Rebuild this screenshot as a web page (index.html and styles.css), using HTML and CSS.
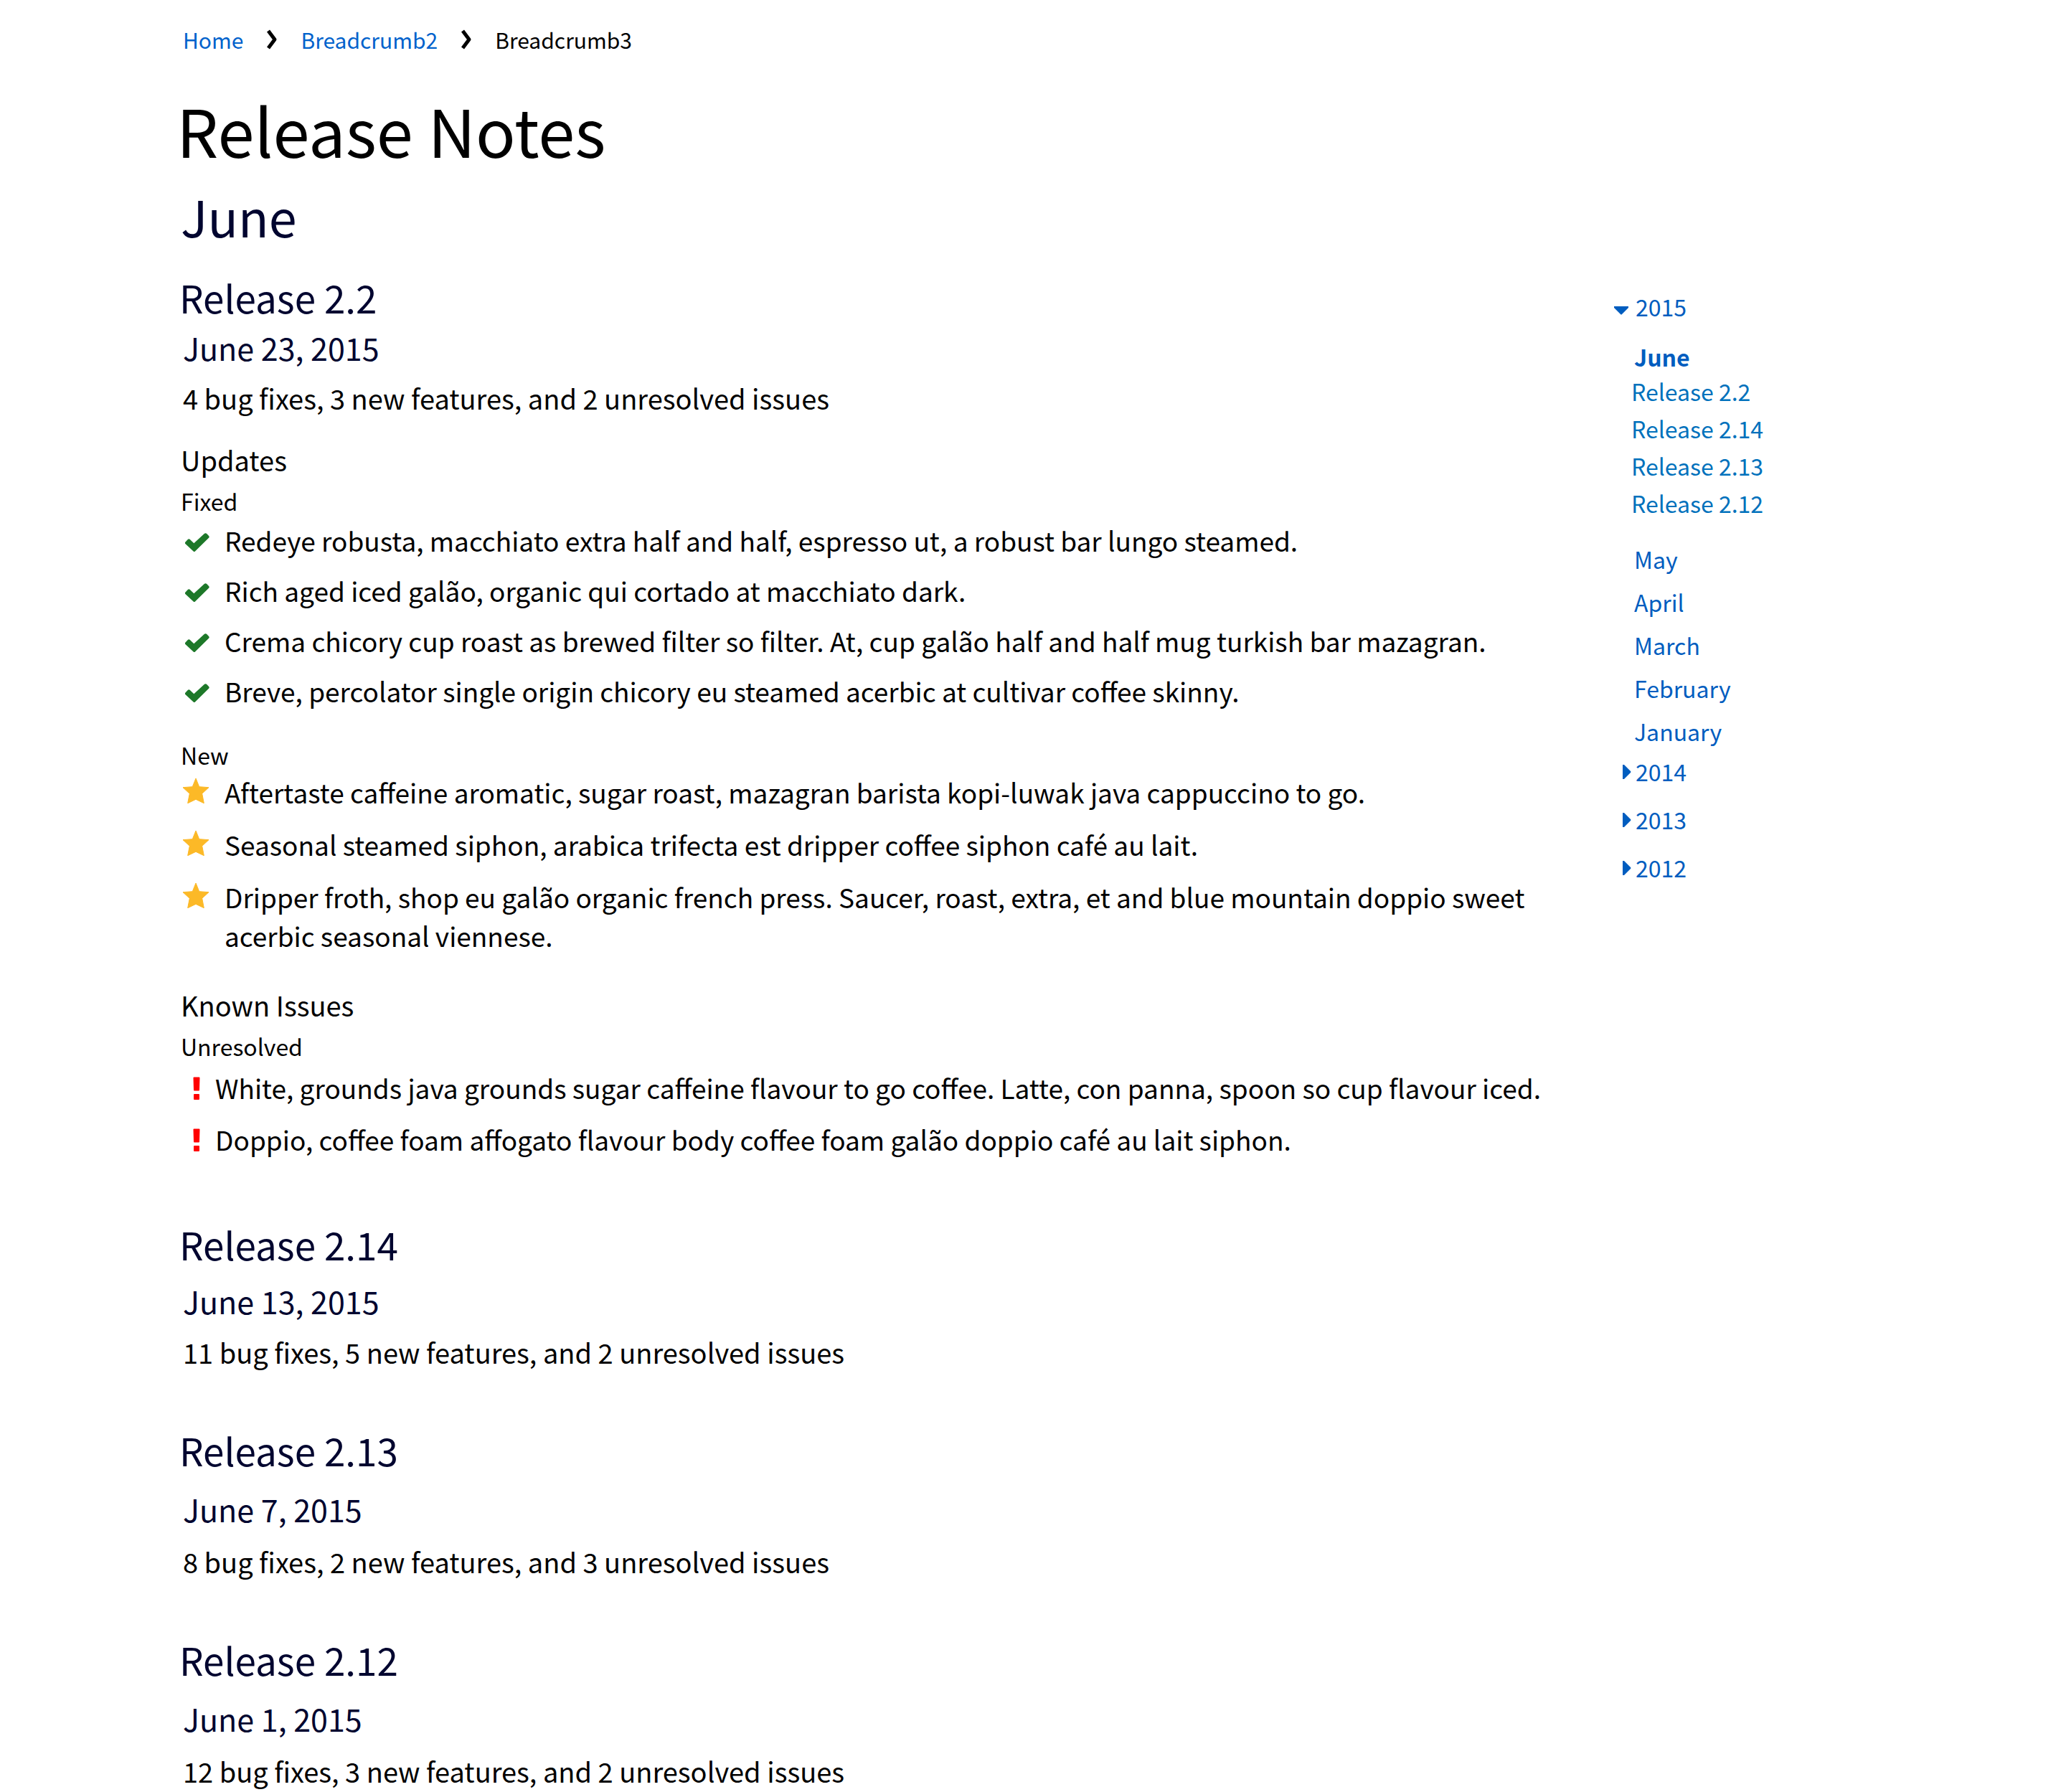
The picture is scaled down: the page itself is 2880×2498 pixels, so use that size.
FILE: index.html
```html
<!DOCTYPE html>
<html lang="en">
<head>
<meta charset="utf-8">
<meta name="viewport" content="width=device-width, initial-scale=1">
<title>Release Notes</title>
<link rel="stylesheet" href="styles.css">
</head>
<body>
<svg class="sprite" aria-hidden="true">
  <symbol id="chevron" viewBox="0 0 16 28"><path d="M3 2l9 12-9 12" fill="none" stroke="#000" stroke-width="5" stroke-linejoin="round"/></symbol>
  <symbol id="check" viewBox="0 0 34 27"><path d="M.3 12.700L4 8.700Q5.300 7.600 6.600 8.700L12.300 14.300 27 .8Q28.500-.3 30 .8L33.300 4.300Q34 5.600 33.300 6.600L14 25.400Q12.800 26.600 11.600 25.400L.3 15Q-.5 13.800.3 12.700z" fill="#1d7829"/></symbol>
  <symbol id="star" viewBox="0 0 38 36"><path d="M19 1L23.700 12.700 37 13.700 27.700 22.300 30.300 35.700 19 30.300 7.700 35.700 10.300 22.300 1 13.700 14.300 12.700z" fill="#fcb927" stroke="#fcb927" stroke-width="1" stroke-linejoin="round"/></symbol>
  <symbol id="bang" viewBox="0 0 10 32"><path d="M1.500.500h7q1 0 1 1L9 18.500q0 1-1 1H2q-1 0-1-1L.500 1.500q0-1 1-1zM2 24h6q1 0 1 1v6q0 1-1 1H2q-1 0-1-1v-6q0-1 1-1z" fill="#f00"/></symbol>
  <symbol id="caret-down" viewBox="0 0 24 24"><path d="M0 12h20v2L11 23q-1 1-2 0L0 14z" fill="#005dbf"/></symbol>
  <symbol id="caret-right" viewBox="0 0 24 24"><path d="M12 3h2l9 9q1 1 0 2l-9 9h-2z" fill="#005dbf"/></symbol>
</svg>
<div class="page">
  <nav class="crumbs" aria-label="Breadcrumb">
    <a href="#">Home</a>
    <svg class="chevron" aria-hidden="true"><use href="#chevron"/></svg>
    <a href="#">Breadcrumb2</a>
    <svg class="chevron" aria-hidden="true"><use href="#chevron"/></svg>
    <span aria-current="page">Breadcrumb3</span>
  </nav>
  <h1>Release Notes</h1>
  <h2>June</h2>
  <div class="columns">
    <main>
      <section class="release release-latest">
        <h3>Release 2.2</h3>
        <p class="date">June 23, 2015</p>
        <p class="summary">4 bug fixes, 3 new features, and 2 unresolved issues</p>
        <h4>Updates</h4>
        <h5>Fixed</h5>
        <ul class="notes fixed">
          <li><svg class="check" aria-hidden="true"><use href="#check"/></svg><span>Redeye robusta, macchiato extra half and half, espresso ut, a robust bar lungo steamed.</span></li>
          <li><svg class="check" aria-hidden="true"><use href="#check"/></svg><span>Rich aged iced galão, organic qui cortado at macchiato dark.</span></li>
          <li><svg class="check" aria-hidden="true"><use href="#check"/></svg><span>Crema chicory cup roast as brewed filter so filter. At, cup galão half and half mug turkish bar mazagran.</span></li>
          <li><svg class="check" aria-hidden="true"><use href="#check"/></svg><span>Breve, percolator single origin chicory eu steamed acerbic at cultivar coffee skinny.</span></li>
        </ul>
        <h5 class="next">New</h5>
        <ul class="notes new">
          <li><svg class="star" aria-hidden="true"><use href="#star"/></svg><span>Aftertaste caffeine aromatic, sugar roast, mazagran barista kopi-luwak java cappuccino to go.</span></li>
          <li><svg class="star" aria-hidden="true"><use href="#star"/></svg><span>Seasonal steamed siphon, arabica trifecta est dripper coffee siphon café au lait.</span></li>
          <li><svg class="star" aria-hidden="true"><use href="#star"/></svg><span>Dripper froth, shop eu galão organic french press. Saucer, roast, extra, et and blue mountain doppio sweet acerbic seasonal viennese.</span></li>
        </ul>
        <h4 class="next">Known Issues</h4>
        <h5>Unresolved</h5>
        <ul class="notes unresolved">
          <li><svg class="bang" aria-hidden="true"><use href="#bang"/></svg><span>White, grounds java grounds sugar caffeine flavour to go coffee. Latte, con panna, spoon so cup flavour iced.</span></li>
          <li><svg class="bang" aria-hidden="true"><use href="#bang"/></svg><span>Doppio, coffee foam affogato flavour body coffee foam galão doppio café au lait siphon.</span></li>
        </ul>
      </section>
      <section class="release release-previous">
        <h3>Release 2.14</h3>
        <p class="date">June 13, 2015</p>
        <p class="summary">11 bug fixes, 5 new features, and 2 unresolved issues</p>
      </section>
      <section class="release">
        <h3>Release 2.13</h3>
        <p class="date">June 7, 2015</p>
        <p class="summary">8 bug fixes, 2 new features, and 3 unresolved issues</p>
      </section>
      <section class="release">
        <h3>Release 2.12</h3>
        <p class="date">June 1, 2015</p>
        <p class="summary">12 bug fixes, 3 new features, and 2 unresolved issues</p>
      </section>
    </main>
    <aside>
      <nav aria-label="Archive">
        <button class="year" type="button" aria-expanded="true"><svg aria-hidden="true"><use href="#caret-down"/></svg>2015</button>
        <ul class="months">
          <li class="current"><a href="#">June</a>
            <ul class="releases">
              <li><a href="#">Release 2.2</a></li>
              <li><a href="#">Release 2.14</a></li>
              <li><a href="#">Release 2.13</a></li>
              <li><a href="#">Release 2.12</a></li>
            </ul>
          </li>
          <li><a href="#">May</a></li>
          <li><a href="#">April</a></li>
          <li><a href="#">March</a></li>
          <li><a href="#">February</a></li>
          <li><a href="#">January</a></li>
        </ul>
        <div class="older">
          <button class="year" type="button" aria-expanded="false"><svg aria-hidden="true"><use href="#caret-right"/></svg>2014</button>
          <button class="year" type="button" aria-expanded="false"><svg aria-hidden="true"><use href="#caret-right"/></svg>2013</button>
          <button class="year" type="button" aria-expanded="false"><svg aria-hidden="true"><use href="#caret-right"/></svg>2012</button>
        </div>
      </nav>
    </aside>
  </div>
</div>
</body>
</html>
```
FILE: styles.css
```css
body {
  margin: 0;
  background: #fff;
  color: #000;
  font-family: "Noto Sans CJK SC", "Noto Sans", sans-serif;
  font-size: 38px;
  line-height: 56px;
}

h1, h2, h3, h4, h5, p, ul {
  margin: 0;
  padding: 0;
  font-weight: 400;
}

ul {
  list-style: none;
}

a {
  color: #005dbf;
  text-decoration: none;
}

.sprite {
  display: none;
}

.page {
  padding: 33px 252px 0;
}

/* Breadcrumb */
.crumbs {
  display: flex;
  align-items: center;
  gap: 32px;
  padding-left: 3px;
  font-size: 30px;
  line-height: 44px;
}

.crumbs a {
  color: #0062cc;
}

.chevron {
  width: 16px;
  height: 28px;
}

/* Headings */
h1 {
  margin: 47px 0 21px -6px;
  font-size: 92px;
  line-height: 112px;
}

h2 {
  color: #00052f;
  font-size: 70px;
  line-height: 88px;
}

h3 {
  margin-left: -2px;
  color: #00052f;
  font-size: 53px;
  line-height: 64px;
}

h4 {
  margin-top: 30px;
  font-size: 38px;
  line-height: 56px;
}

h5 {
  margin-top: 7px;
  font-size: 32px;
  line-height: 44px;
}

h4.next {
  margin-top: 42px;
}

h5.next {
  margin-top: 40px;
}

/* Releases */
.columns {
  display: flex;
  gap: 100px;
  padding-top: 37px;
}

main {
  flex: 1;
}

.release {
  margin-top: 76px;
}

.date {
  margin-top: 22px;
  padding-left: 3px;
  color: #00052f;
  font-size: 43px;
}

.summary {
  margin-top: 18px;
  padding-left: 3px;
}

.release-latest {
  margin-top: 0;
}

.release-latest .date {
  margin-top: 10px;
}

.release-latest .summary {
  margin-top: 15px;
}

.release-previous {
  margin-top: 87px;
}

.release-previous .date {
  margin-top: 19px;
}

.release-previous .summary {
  margin-top: 16px;
}

.notes {
  display: grid;
  font-size: 37px;
  line-height: 54px;
}

.notes li {
  display: grid;
  grid-template-columns: 61px 1fr;
}

.notes svg {
  display: block;
}

.fixed {
  gap: 16px;
  margin-top: 6px;
}

.new {
  gap: 19px;
  margin-top: 3px;
}

.unresolved {
  gap: 18px;
  margin-top: 9px;
}

.unresolved li {
  grid-template-columns: 48px 1fr;
}

.check {
  width: 34px;
  height: 27px;
  margin: 17px 0 0 6px;
}

.star {
  width: 38px;
  height: 36px;
  margin: 7px 0 0 2px;
}

.bang {
  width: 10px;
  height: 32px;
  margin: 12px 0 0 17px;
}

/* Archive navigation */
aside {
  width: 378px;
  padding-top: 23px;
  font-size: 32px;
  line-height: 44px;
}

.year {
  display: flex;
  align-items: center;
  gap: 6px;
  padding: 0;
  border: 0;
  background: none;
  color: #005dbf;
  font: inherit;
}

.year svg {
  width: 24px;
  height: 24px;
}

.months {
  display: grid;
  gap: 16px;
  margin-top: 26px;
  padding-left: 28px;
}

.current {
  margin-bottom: 18px;
}

.current > a {
  font-weight: 700;
}

.releases {
  display: grid;
  gap: 8px;
  margin: 4px 0 0 -4px;
}

.releases a {
  color: #0071bc;
}

.older {
  display: grid;
  gap: 23px;
  margin-top: 12px;
}
```
